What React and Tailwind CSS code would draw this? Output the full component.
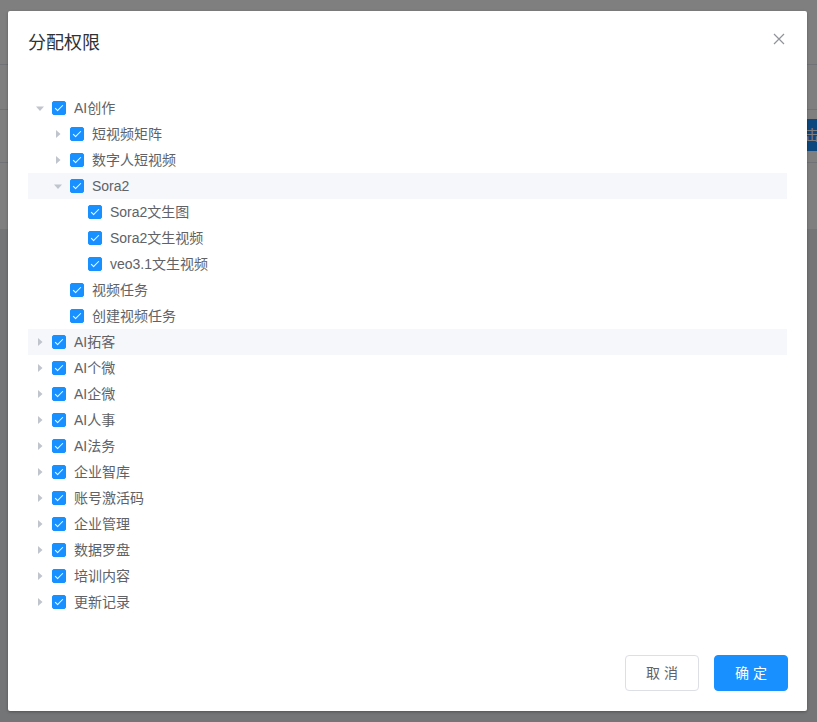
import React from 'react';

const tree = [
  { label: 'AI创作', open: true, children: [
    { label: '短视频矩阵', children: [{ label: 'x' }] },
    { label: '数字人短视频', children: [{ label: 'x' }] },
    { label: 'Sora2', open: true, hover: true, children: [
      { label: 'Sora2文生图' },
      { label: 'Sora2文生视频' },
      { label: 'veo3.1文生视频' },
    ] },
    { label: '视频任务' },
    { label: '创建视频任务' },
  ] },
  { label: 'AI拓客', hover: true, children: [{ label: 'x' }] },
  { label: 'AI个微', children: [{ label: 'x' }] },
  { label: 'AI企微', children: [{ label: 'x' }] },
  { label: 'AI人事', children: [{ label: 'x' }] },
  { label: 'AI法务', children: [{ label: 'x' }] },
  { label: '企业智库', children: [{ label: 'x' }] },
  { label: '账号激活码', children: [{ label: 'x' }] },
  { label: '企业管理', children: [{ label: 'x' }] },
  { label: '数据罗盘', children: [{ label: 'x' }] },
  { label: '培训内容', children: [{ label: 'x' }] },
  { label: '更新记录', children: [{ label: 'x' }] },
];

const Caret = ({ open }) => (
  <svg width="12" height="12" viewBox="0 0 12 12">
    {open
      ? <path d="M2 4.5 L10 4.5 L6 9 Z" fill="#c0c4cc" />
      : <path d="M4 2 L8.5 6 L4 10 Z" fill="#c0c4cc" />}
  </svg>
);

const Checkbox = () => (
  <span className="relative inline-block w-[14px] h-[14px] rounded-[2px] bg-[#1890ff] border border-[#1890ff] mr-2 shrink-0">
    <span className="absolute left-[4px] top-[1px] w-[4px] h-[8px] border-r border-b border-white rotate-45" />
  </span>
);

const Node = ({ node, level }) => {
  const hasChildren = !!node.children;
  return (
    <>
      <div
        className={`flex items-center h-[26px] ${node.hover ? 'bg-[#f5f7fa]' : ''}`}
        style={{ paddingLeft: level * 18 }}
      >
        <span className="w-[24px] h-[26px] flex items-center justify-center shrink-0">
          {hasChildren ? <Caret open={node.open} /> : null}
        </span>
        <Checkbox />
        <span className="text-[14px] text-[#606266] leading-[26px]">{node.label}</span>
      </div>
      {node.open && node.children.map((c) => <Node key={c.label} node={c} level={level + 1} />)}
    </>
  );
};

export default function App() {
  return (
    <div className="relative w-full h-[722px] overflow-hidden bg-[#e9ebee]" style={{ fontFamily: '"Liberation Sans", "Noto Sans CJK SC", sans-serif' }}>
      {/* page behind the modal */}
      <div className="bg-white h-[229px] flex flex-col">
        <div className="h-[65px] border-b border-[#dfe6ec]" />
        <div className="h-[45px] border-b border-[#dfe6ec]" />
        <div className="h-[53px] border-b border-[#dfe6ec] flex items-start justify-end pt-[9px]">
          <button className="h-[32px] w-[27px] bg-[#1890ff] text-white text-[14px] rounded-l-[3px] pl-[1px] text-left overflow-hidden whitespace-nowrap">点击</button>
        </div>
      </div>

      {/* mask */}
      <div className="absolute inset-0 bg-black/50" />

      {/* dialog */}
      <div className="absolute left-[8px] top-[11px] w-[799px] h-[700px] bg-white rounded-[2px] shadow-[0_1px_3px_rgba(0,0,0,0.3)] flex flex-col">
        <div className="relative px-5 pt-5 pb-[10px]">
          <span className="text-[18px] leading-[24px] text-[#303133]">分配权限</span>
          <button className="absolute right-5 top-5 w-4 h-4 flex items-center justify-center">
            <svg width="12" height="12" viewBox="0 0 12 12">
              <path d="M1 1 L11 11 M11 1 L1 11" stroke="#909399" strokeWidth="1.2" />
            </svg>
          </button>
        </div>
        <div className="px-5 pt-[29px] pb-[30px]">
          {tree.map((n) => <Node key={n.label} node={n} level={0} />)}
        </div>
        <div className="mt-auto flex justify-end gap-[15px] pl-5 pr-[19px] pb-[20px]">
          <button className="w-[74px] h-[36px] border border-[#dcdfe6] rounded-[4px] text-[14px] text-[#606266] tracking-[4px] pl-[4px]">取消</button>
          <button className="w-[74px] h-[36px] bg-[#1890ff] border border-[#1890ff] rounded-[4px] text-[14px] text-white tracking-[4px] pl-[4px]">确定</button>
        </div>
      </div>
    </div>
  );
}
